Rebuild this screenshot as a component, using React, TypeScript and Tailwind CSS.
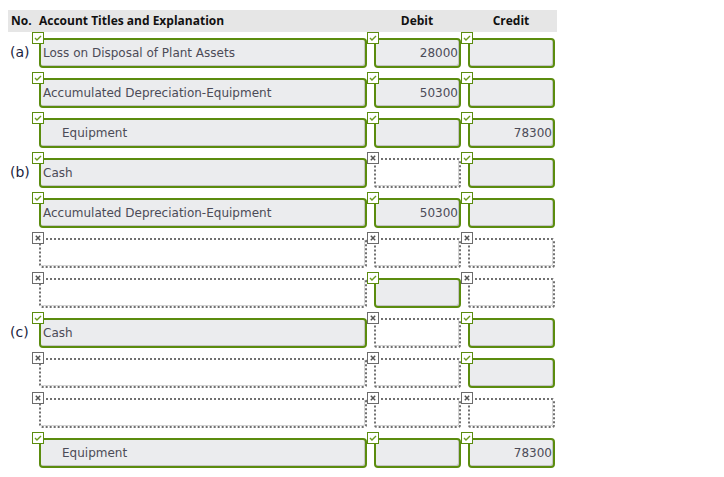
import React from "react";

type Cell = { ok: boolean; text?: string; indent?: boolean };
type Row = { label?: string; acct: Cell; debit: Cell; credit: Cell };

const rows: Row[] = [
  { label: "(a)", acct: { ok: true, text: "Loss on Disposal of Plant Assets" }, debit: { ok: true, text: "28000" }, credit: { ok: true } },
  { acct: { ok: true, text: "Accumulated Depreciation-Equipment" }, debit: { ok: true, text: "50300" }, credit: { ok: true } },
  { acct: { ok: true, text: "Equipment", indent: true }, debit: { ok: true }, credit: { ok: true, text: "78300" } },
  { label: "(b)", acct: { ok: true, text: "Cash" }, debit: { ok: false }, credit: { ok: true } },
  { acct: { ok: true, text: "Accumulated Depreciation-Equipment" }, debit: { ok: true, text: "50300" }, credit: { ok: true } },
  { acct: { ok: false }, debit: { ok: false }, credit: { ok: false } },
  { acct: { ok: false }, debit: { ok: true }, credit: { ok: false } },
  { label: "(c)", acct: { ok: true, text: "Cash" }, debit: { ok: false }, credit: { ok: true } },
  { acct: { ok: false }, debit: { ok: false }, credit: { ok: true } },
  { acct: { ok: false }, debit: { ok: false }, credit: { ok: false } },
  { acct: { ok: true, text: "Equipment", indent: true }, debit: { ok: true }, credit: { ok: true, text: "78300" } },
];

function Mark({ ok }: { ok: boolean }) {
  if (ok) {
    return (
      <span className="absolute left-0 top-0 z-10 flex h-[12px] w-[12px] items-center justify-center border border-[#5b8c0e] bg-white">
        <svg width="8" height="6" viewBox="0 0 8 6">
          <path d="M1 3 L3 5 L7 1" fill="none" stroke="#6b9a1e" strokeWidth="1.4" />
        </svg>
      </span>
    );
  }
  return (
    <span className="absolute left-0 top-0 z-10 flex h-[12px] w-[12px] items-center justify-center border border-[#6b6b6b] bg-white">
      <svg width="6" height="6" viewBox="0 0 6 6">
        <path d="M0.8 0.8 L5.2 5.2 M5.2 0.8 L0.8 5.2" stroke="#555" strokeWidth="1.5" />
      </svg>
    </span>
  );
}

function Field({ cell, width, right }: { cell: Cell; width: string; right?: boolean }) {
  return (
    <div className={`relative h-[40px] shrink-0 pl-[7px] pt-[6px] ${width}`}>
      <Mark ok={cell.ok} />
      <div
        className={
          cell.ok
            ? "flex h-[30px] items-center rounded-[4px] border-[2px] border-[#5b8c0e] bg-[#ebecee] shadow-[inset_-1px_-1px_0_#c4c4c4]"
            : "flex h-[30px] items-center rounded-[3px] border-[2px] border-dotted border-[#707070] bg-white shadow-[inset_-1px_-1px_0_#d4d4d4]"
        }
      >
        {cell.text && (
          <span
            className={`w-full truncate text-[12px] text-[#4b4b57] ${right ? "pr-[1px] text-right" : cell.indent ? "pl-[21px]" : "pl-[2px]"}`}
          >
            {cell.text}
          </span>
        )}
      </div>
    </div>
  );
}

export default function App() {
  return (
    <div className="min-h-[477px] bg-white pl-[8px] pt-[10px] font-['DejaVu_Sans',Verdana,sans-serif]">
      <div className="flex h-[22px] w-[549px] items-center bg-[#e6e6e6] font-['Open_Sans',sans-serif] text-[12px] font-bold text-[#111]">
        <span className="w-[31px] pl-[3px]">No.</span>
        <span className="w-[328px]">Account Titles and Explanation</span>
        <span className="w-[94px] pl-[6px] text-center">Debit</span>
        <span className="w-[94px] pl-[6px] text-center">Credit</span>
      </div>
      {rows.map((r, i) => (
        <div key={i} className="flex">
          <div className="w-[24px] shrink-0 pl-[2px] pt-[10px] text-[14px] text-[#1a2340]">{r.label}</div>
          <Field cell={r.acct} width="w-[335px]" />
          <Field cell={r.debit} width="w-[94px]" right />
          <Field cell={r.credit} width="w-[94px]" right />
        </div>
      ))}
    </div>
  );
}
